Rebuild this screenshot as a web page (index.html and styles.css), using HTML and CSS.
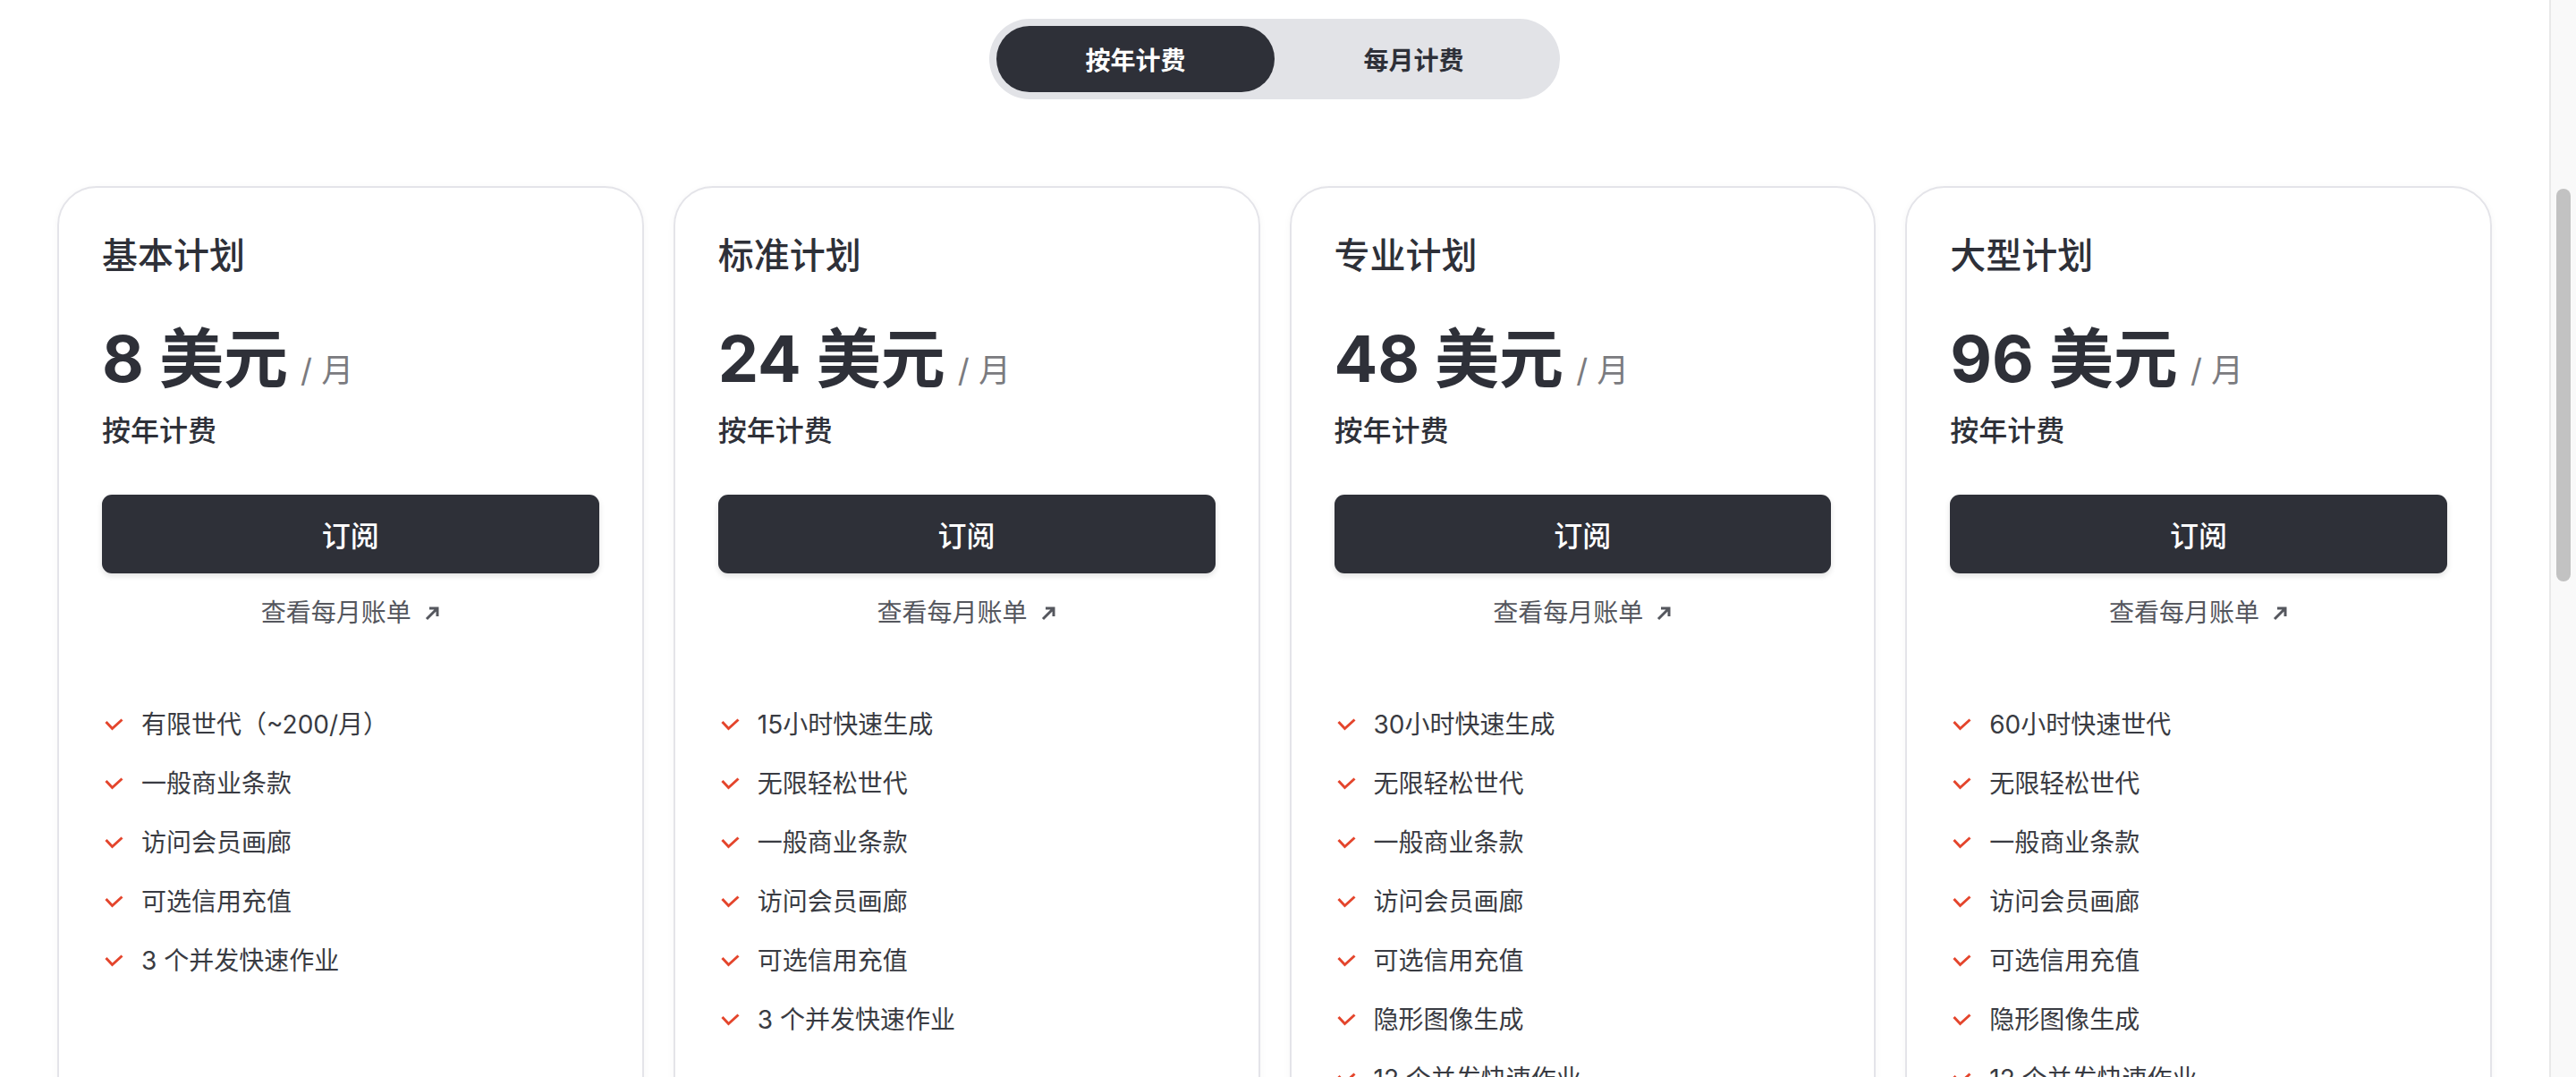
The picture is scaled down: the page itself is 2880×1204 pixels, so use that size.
FILE: index.html
```html
<!DOCTYPE html>
<html lang="zh-CN">
<head>
    <meta charset="UTF-8">
    <meta name="viewport" content="width=device-width, initial-scale=1.0">
    <title>订阅计划</title>
    <link rel="stylesheet" href="styles.css">
</head>
<body>
<main class="page">
    <!-- 计费周期切换 -->
    <div class="toggle-wrap">
        <div class="billing-toggle">
            <button class="toggle-btn active">按年计费</button>
            <button class="toggle-btn">每月计费</button>
        </div>
    </div>

    <section class="plans">
        <div class="plan-card">
            <h2 class="plan-name">基本计划</h2>
            <div class="plan-price">8 美元<span class="per"> / 月</span></div>
            <div class="plan-billing">按年计费</div>
            <button class="subscribe-btn">订阅</button>
            <a class="monthly-link" href="#">查看每月账单
                <svg width="17" height="17" viewBox="0 0 17 17"><path d="M2 15 L13.5 3.5 M5 3 H14 V12" fill="none" stroke="currentColor" stroke-width="3"/></svg>
            </a>
            <ul class="features">
                <li><svg class="check" width="21" height="14" viewBox="0 0 21 14"><path d="M1.5 4 L8.5 11.5 L19.5 1.5" fill="none" stroke="currentColor" stroke-width="3"/></svg>有限世代（~200/月）</li>
                <li><svg class="check" width="21" height="14" viewBox="0 0 21 14"><path d="M1.5 4 L8.5 11.5 L19.5 1.5" fill="none" stroke="currentColor" stroke-width="3"/></svg>一般商业条款</li>
                <li><svg class="check" width="21" height="14" viewBox="0 0 21 14"><path d="M1.5 4 L8.5 11.5 L19.5 1.5" fill="none" stroke="currentColor" stroke-width="3"/></svg>访问会员画廊</li>
                <li><svg class="check" width="21" height="14" viewBox="0 0 21 14"><path d="M1.5 4 L8.5 11.5 L19.5 1.5" fill="none" stroke="currentColor" stroke-width="3"/></svg>可选信用充值</li>
                <li><svg class="check" width="21" height="14" viewBox="0 0 21 14"><path d="M1.5 4 L8.5 11.5 L19.5 1.5" fill="none" stroke="currentColor" stroke-width="3"/></svg>3 个并发快速作业</li>
            </ul>
        </div>

        <div class="plan-card">
            <h2 class="plan-name">标准计划</h2>
            <div class="plan-price">24 美元<span class="per"> / 月</span></div>
            <div class="plan-billing">按年计费</div>
            <button class="subscribe-btn">订阅</button>
            <a class="monthly-link" href="#">查看每月账单
                <svg width="17" height="17" viewBox="0 0 17 17"><path d="M2 15 L13.5 3.5 M5 3 H14 V12" fill="none" stroke="currentColor" stroke-width="3"/></svg>
            </a>
            <ul class="features">
                <li><svg class="check" width="21" height="14" viewBox="0 0 21 14"><path d="M1.5 4 L8.5 11.5 L19.5 1.5" fill="none" stroke="currentColor" stroke-width="3"/></svg>15小时快速生成</li>
                <li><svg class="check" width="21" height="14" viewBox="0 0 21 14"><path d="M1.5 4 L8.5 11.5 L19.5 1.5" fill="none" stroke="currentColor" stroke-width="3"/></svg>无限轻松世代</li>
                <li><svg class="check" width="21" height="14" viewBox="0 0 21 14"><path d="M1.5 4 L8.5 11.5 L19.5 1.5" fill="none" stroke="currentColor" stroke-width="3"/></svg>一般商业条款</li>
                <li><svg class="check" width="21" height="14" viewBox="0 0 21 14"><path d="M1.5 4 L8.5 11.5 L19.5 1.5" fill="none" stroke="currentColor" stroke-width="3"/></svg>访问会员画廊</li>
                <li><svg class="check" width="21" height="14" viewBox="0 0 21 14"><path d="M1.5 4 L8.5 11.5 L19.5 1.5" fill="none" stroke="currentColor" stroke-width="3"/></svg>可选信用充值</li>
                <li><svg class="check" width="21" height="14" viewBox="0 0 21 14"><path d="M1.5 4 L8.5 11.5 L19.5 1.5" fill="none" stroke="currentColor" stroke-width="3"/></svg>3 个并发快速作业</li>
            </ul>
        </div>

        <div class="plan-card">
            <h2 class="plan-name">专业计划</h2>
            <div class="plan-price">48 美元<span class="per"> / 月</span></div>
            <div class="plan-billing">按年计费</div>
            <button class="subscribe-btn">订阅</button>
            <a class="monthly-link" href="#">查看每月账单
                <svg width="17" height="17" viewBox="0 0 17 17"><path d="M2 15 L13.5 3.5 M5 3 H14 V12" fill="none" stroke="currentColor" stroke-width="3"/></svg>
            </a>
            <ul class="features">
                <li><svg class="check" width="21" height="14" viewBox="0 0 21 14"><path d="M1.5 4 L8.5 11.5 L19.5 1.5" fill="none" stroke="currentColor" stroke-width="3"/></svg>30小时快速生成</li>
                <li><svg class="check" width="21" height="14" viewBox="0 0 21 14"><path d="M1.5 4 L8.5 11.5 L19.5 1.5" fill="none" stroke="currentColor" stroke-width="3"/></svg>无限轻松世代</li>
                <li><svg class="check" width="21" height="14" viewBox="0 0 21 14"><path d="M1.5 4 L8.5 11.5 L19.5 1.5" fill="none" stroke="currentColor" stroke-width="3"/></svg>一般商业条款</li>
                <li><svg class="check" width="21" height="14" viewBox="0 0 21 14"><path d="M1.5 4 L8.5 11.5 L19.5 1.5" fill="none" stroke="currentColor" stroke-width="3"/></svg>访问会员画廊</li>
                <li><svg class="check" width="21" height="14" viewBox="0 0 21 14"><path d="M1.5 4 L8.5 11.5 L19.5 1.5" fill="none" stroke="currentColor" stroke-width="3"/></svg>可选信用充值</li>
                <li><svg class="check" width="21" height="14" viewBox="0 0 21 14"><path d="M1.5 4 L8.5 11.5 L19.5 1.5" fill="none" stroke="currentColor" stroke-width="3"/></svg>隐形图像生成</li>
                <li><svg class="check" width="21" height="14" viewBox="0 0 21 14"><path d="M1.5 4 L8.5 11.5 L19.5 1.5" fill="none" stroke="currentColor" stroke-width="3"/></svg>12 个并发快速作业</li>
            </ul>
        </div>

        <div class="plan-card">
            <h2 class="plan-name">大型计划</h2>
            <div class="plan-price">96 美元<span class="per"> / 月</span></div>
            <div class="plan-billing">按年计费</div>
            <button class="subscribe-btn">订阅</button>
            <a class="monthly-link" href="#">查看每月账单
                <svg width="17" height="17" viewBox="0 0 17 17"><path d="M2 15 L13.5 3.5 M5 3 H14 V12" fill="none" stroke="currentColor" stroke-width="3"/></svg>
            </a>
            <ul class="features">
                <li><svg class="check" width="21" height="14" viewBox="0 0 21 14"><path d="M1.5 4 L8.5 11.5 L19.5 1.5" fill="none" stroke="currentColor" stroke-width="3"/></svg>60小时快速世代</li>
                <li><svg class="check" width="21" height="14" viewBox="0 0 21 14"><path d="M1.5 4 L8.5 11.5 L19.5 1.5" fill="none" stroke="currentColor" stroke-width="3"/></svg>无限轻松世代</li>
                <li><svg class="check" width="21" height="14" viewBox="0 0 21 14"><path d="M1.5 4 L8.5 11.5 L19.5 1.5" fill="none" stroke="currentColor" stroke-width="3"/></svg>一般商业条款</li>
                <li><svg class="check" width="21" height="14" viewBox="0 0 21 14"><path d="M1.5 4 L8.5 11.5 L19.5 1.5" fill="none" stroke="currentColor" stroke-width="3"/></svg>访问会员画廊</li>
                <li><svg class="check" width="21" height="14" viewBox="0 0 21 14"><path d="M1.5 4 L8.5 11.5 L19.5 1.5" fill="none" stroke="currentColor" stroke-width="3"/></svg>可选信用充值</li>
                <li><svg class="check" width="21" height="14" viewBox="0 0 21 14"><path d="M1.5 4 L8.5 11.5 L19.5 1.5" fill="none" stroke="currentColor" stroke-width="3"/></svg>隐形图像生成</li>
                <li><svg class="check" width="21" height="14" viewBox="0 0 21 14"><path d="M1.5 4 L8.5 11.5 L19.5 1.5" fill="none" stroke="currentColor" stroke-width="3"/></svg>12 个并发快速作业</li>
            </ul>
        </div>
    </section>
</main>

<!-- 스크롤바 모양 -->
<aside class="scrollbar">
    <div class="scroll-thumb"></div>
</aside>
</body>
</html>
```

FILE: styles.css
```css
html, body {
    height: 100%;
    overflow: hidden; /* 화면 밖 내용 숨기기 */
}

body {
    margin: 0;
    display: flex;
    background-color: #ffffff;
    color: #2e3038;
    font-family: Inter, "Noto Sans CJK SC", sans-serif;
}

.page {
    flex: 1;
    padding-top: 21px;
}

/* 계산 주기 토글 */
.toggle-wrap {
    display: flex;
    justify-content: center;
}

.billing-toggle {
    display: flex;
    padding: 8px;
    background-color: #e2e3e7;
    border-radius: 45px;
}

.toggle-btn {
    width: 311px;
    height: 74px;
    border: none;
    border-radius: 37px;
    background-color: transparent;
    color: #2e3038;
    font-family: inherit;
    font-size: 28px;
    font-weight: 600;
    cursor: pointer;
}

.toggle-btn.active {
    background-color: #2e3038;
    color: #ffffff;
}

/* 요금제 카드 */
.plans {
    display: grid;
    grid-template-columns: repeat(4, 1fr);
    gap: 33px;
    padding: 0 64px;
    margin-top: 97px;
}

.plan-card {
    display: flex;
    flex-direction: column;
    padding: 48px 48px 60px;
    border: 2px solid #e4e4e9;
    border-radius: 44px;
    background-color: #ffffff;
    box-shadow: 0 2px 8px rgba(0, 0, 0, 0.04);
}

.plan-name {
    margin: 0;
    font-size: 40px;
    line-height: 56px;
    font-weight: 500;
}

.plan-price {
    margin-top: 47px;
    font-size: 72px;
    line-height: 80px;
    font-weight: 700;
}

.plan-price .per {
    margin-left: 4px;
    font-size: 36px;
    line-height: 1; /* 줄 높이 늘어나지 않게 */
    font-weight: 400;
    color: #7b7b7f;
}

.plan-billing {
    margin-top: 19px;
    font-size: 32px;
    line-height: 44px;
    font-weight: 500;
}

.subscribe-btn {
    margin-top: 49px;
    height: 88px;
    border: none;
    border-radius: 11px;
    background-color: #2e3038;
    color: #ffffff;
    font-family: inherit;
    font-size: 32px;
    font-weight: 500;
    box-shadow: 0 3px 6px rgba(0, 0, 0, 0.12);
    cursor: pointer;
}

.monthly-link {
    display: flex;
    justify-content: center;
    align-items: center;
    gap: 15px;
    margin-top: 24px;
    font-size: 28px;
    line-height: 40px;
    color: #55575e;
    text-decoration: none;
}

.features {
    list-style: none;
    margin: 84px 0 0;
    padding: 0;
    display: flex;
    flex-direction: column;
    gap: 24px;
}

.features li {
    display: flex;
    align-items: center;
    gap: 20px;
    padding-left: 3px;
    font-size: 28px;
    line-height: 42px;
    color: #393b42;
}

.check {
    flex-shrink: 0;
    color: #e4452c;
}

/* 오른쪽 스크롤바 */
.scrollbar {
    width: 22px;
    flex-shrink: 0;
    padding: 211px 6px 0 0;
    border-left: 2px solid #e9e9e9;
    background-color: #f9f9f9;
    display: flex;
    justify-content: flex-end;
}

.scroll-thumb {
    width: 16px;
    height: 439px;
    border-radius: 8px;
    background-color: #c2c2c2;
}
```
